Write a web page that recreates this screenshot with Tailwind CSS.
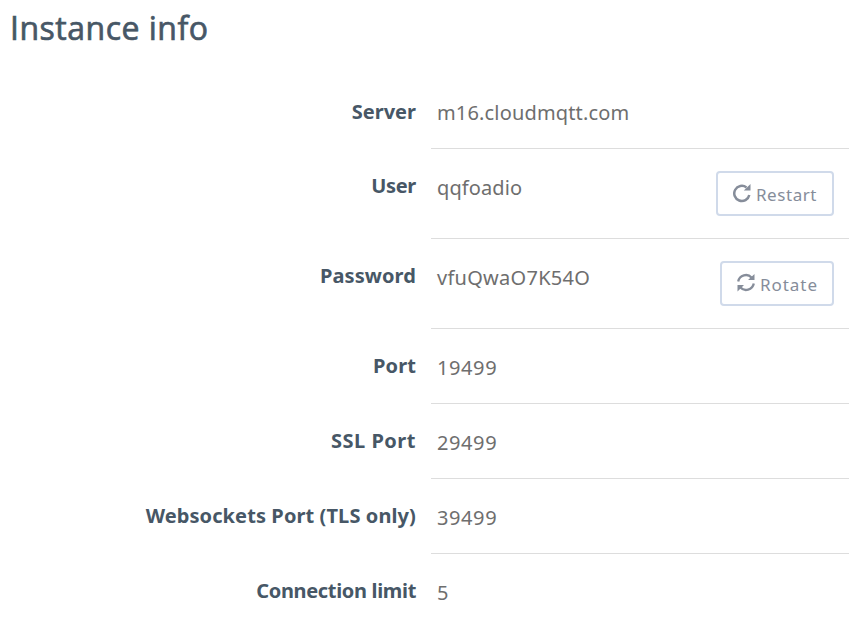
<!DOCTYPE html>
<html lang="en">
<head>
<meta charset="utf-8">
<title>Instance info</title>
<script src="https://cdn.jsdelivr.net/npm/@tailwindcss/browser@4"></script>
</head>
<body class="bg-white w-[859px] h-[620px] overflow-hidden font-['Noto_Sans',sans-serif] text-[20px] leading-[30px] text-[#6e6e6e]">
<h1 class="h-[74px] pl-[10px] pt-[8px] font-['Open_Sans',sans-serif] text-[32px] leading-[40px] font-normal text-[#475766] whitespace-nowrap tracking-[0.5px] [-webkit-text-stroke:0.7px_#475766]"><span>Instance info</span></h1>
<dl class="whitespace-nowrap">
  <div class="flex h-[75px]">
    <dt class="w-[431px] pr-[15px] pt-[23px] text-right font-bold text-[#475766]"><span>Server</span></dt>
    <dd class="w-[418px] pl-[6px] pt-[24px] border-b border-[#dddddd]"><span class="tracking-[0.16px]">m16.cloudmqtt.com</span></dd>
  </div>
  <div class="flex h-[90px]">
    <dt class="w-[431px] pr-[15px] pt-[22px] text-right font-bold text-[#475766]"><span class="tracking-[-0.3px]">User</span></dt>
    <dd class="flex justify-between w-[418px] pl-[6px] pr-[15px] pt-[22px] border-b border-[#dddddd]"><span class="pt-[2px] tracking-[0.1px]">qqfoadio</span>
      <button class="flex w-[118px] h-[45px] pl-[15px] pt-[9px] gap-[3px] border-2 border-[#d0daea] rounded-[4px] text-[#868d9a] text-[17px] leading-[26px]">
        <svg class="w-[20px] h-[20px] mt-[1px]" viewBox="0 0 20 20" fill="none"><path d="M13.500 4.400A7.600 7.600 0 1 0 16.300 12" stroke="currentColor" stroke-width="2.500"/><path d="M17.500 1V7.500H10.800Z" fill="currentColor"/></svg>
        <span class="tracking-[0.55px]">Restart</span></button></dd>
  </div>
  <div class="flex h-[90px]">
    <dt class="w-[431px] pr-[15px] pt-[22px] text-right font-bold text-[#475766]"><span class="tracking-[0.1px]">Password</span></dt>
    <dd class="flex justify-between w-[418px] pl-[6px] pr-[15px] pt-[22px] border-b border-[#dddddd]"><span class="pt-[2px] tracking-[0.27px]">vfuQwaO7K54O</span>
      <button class="flex w-[114px] h-[45px] pl-[15px] pt-[9px] gap-[3px] border-2 border-[#d0daea] rounded-[4px] text-[#868d9a] text-[17px] leading-[26px]">
        <svg class="w-[20px] h-[20px] mt-[1px]" viewBox="0 0 20 20" fill="none"><path d="M1.200 8.500C2.500 2 10.500 0 14.500 4.500M16.800 10.500C15.500 17 7.500 19 3.500 14.500" stroke="currentColor" stroke-width="2.300"/><path d="M17.500 1V7H11ZM0.500 18.500V12H7Z" fill="currentColor"/></svg>
        <span class="tracking-[0.95px]">Rotate</span></button></dd>
  </div>
  <div class="flex h-[75px]">
    <dt class="w-[431px] pr-[15px] pt-[22px] text-right font-bold text-[#475766]"><span class="tracking-[0.1px]">Port</span></dt>
    <dd class="w-[418px] pl-[6px] pt-[24px] border-b border-[#dddddd]"><span class="tracking-[0.6px]">19499</span></dd>
  </div>
  <div class="flex h-[75px]">
    <dt class="w-[431px] pr-[15px] pt-[22px] text-right font-bold text-[#475766]"><span class="tracking-[0.5px]">SSL Port</span></dt>
    <dd class="w-[418px] pl-[6px] pt-[24px] border-b border-[#dddddd]"><span class="tracking-[0.6px]">29499</span></dd>
  </div>
  <div class="flex h-[75px]">
    <dt class="w-[431px] pr-[15px] pt-[22px] text-right font-bold text-[#475766]"><span class="tracking-[0.1px]">Websockets Port (TLS only)</span></dt>
    <dd class="w-[418px] pl-[6px] pt-[24px] border-b border-[#dddddd]"><span class="tracking-[0.6px]">39499</span></dd>
  </div>
  <div class="flex h-[66px]">
    <dt class="w-[431px] pr-[15px] pt-[22px] text-right font-bold text-[#475766]"><span class="tracking-[-0.33px]">Connection limit</span></dt>
    <dd class="w-[418px] pl-[6px] pt-[24px]"><span>5</span></dd>
  </div>
</dl>
</body>
</html>
